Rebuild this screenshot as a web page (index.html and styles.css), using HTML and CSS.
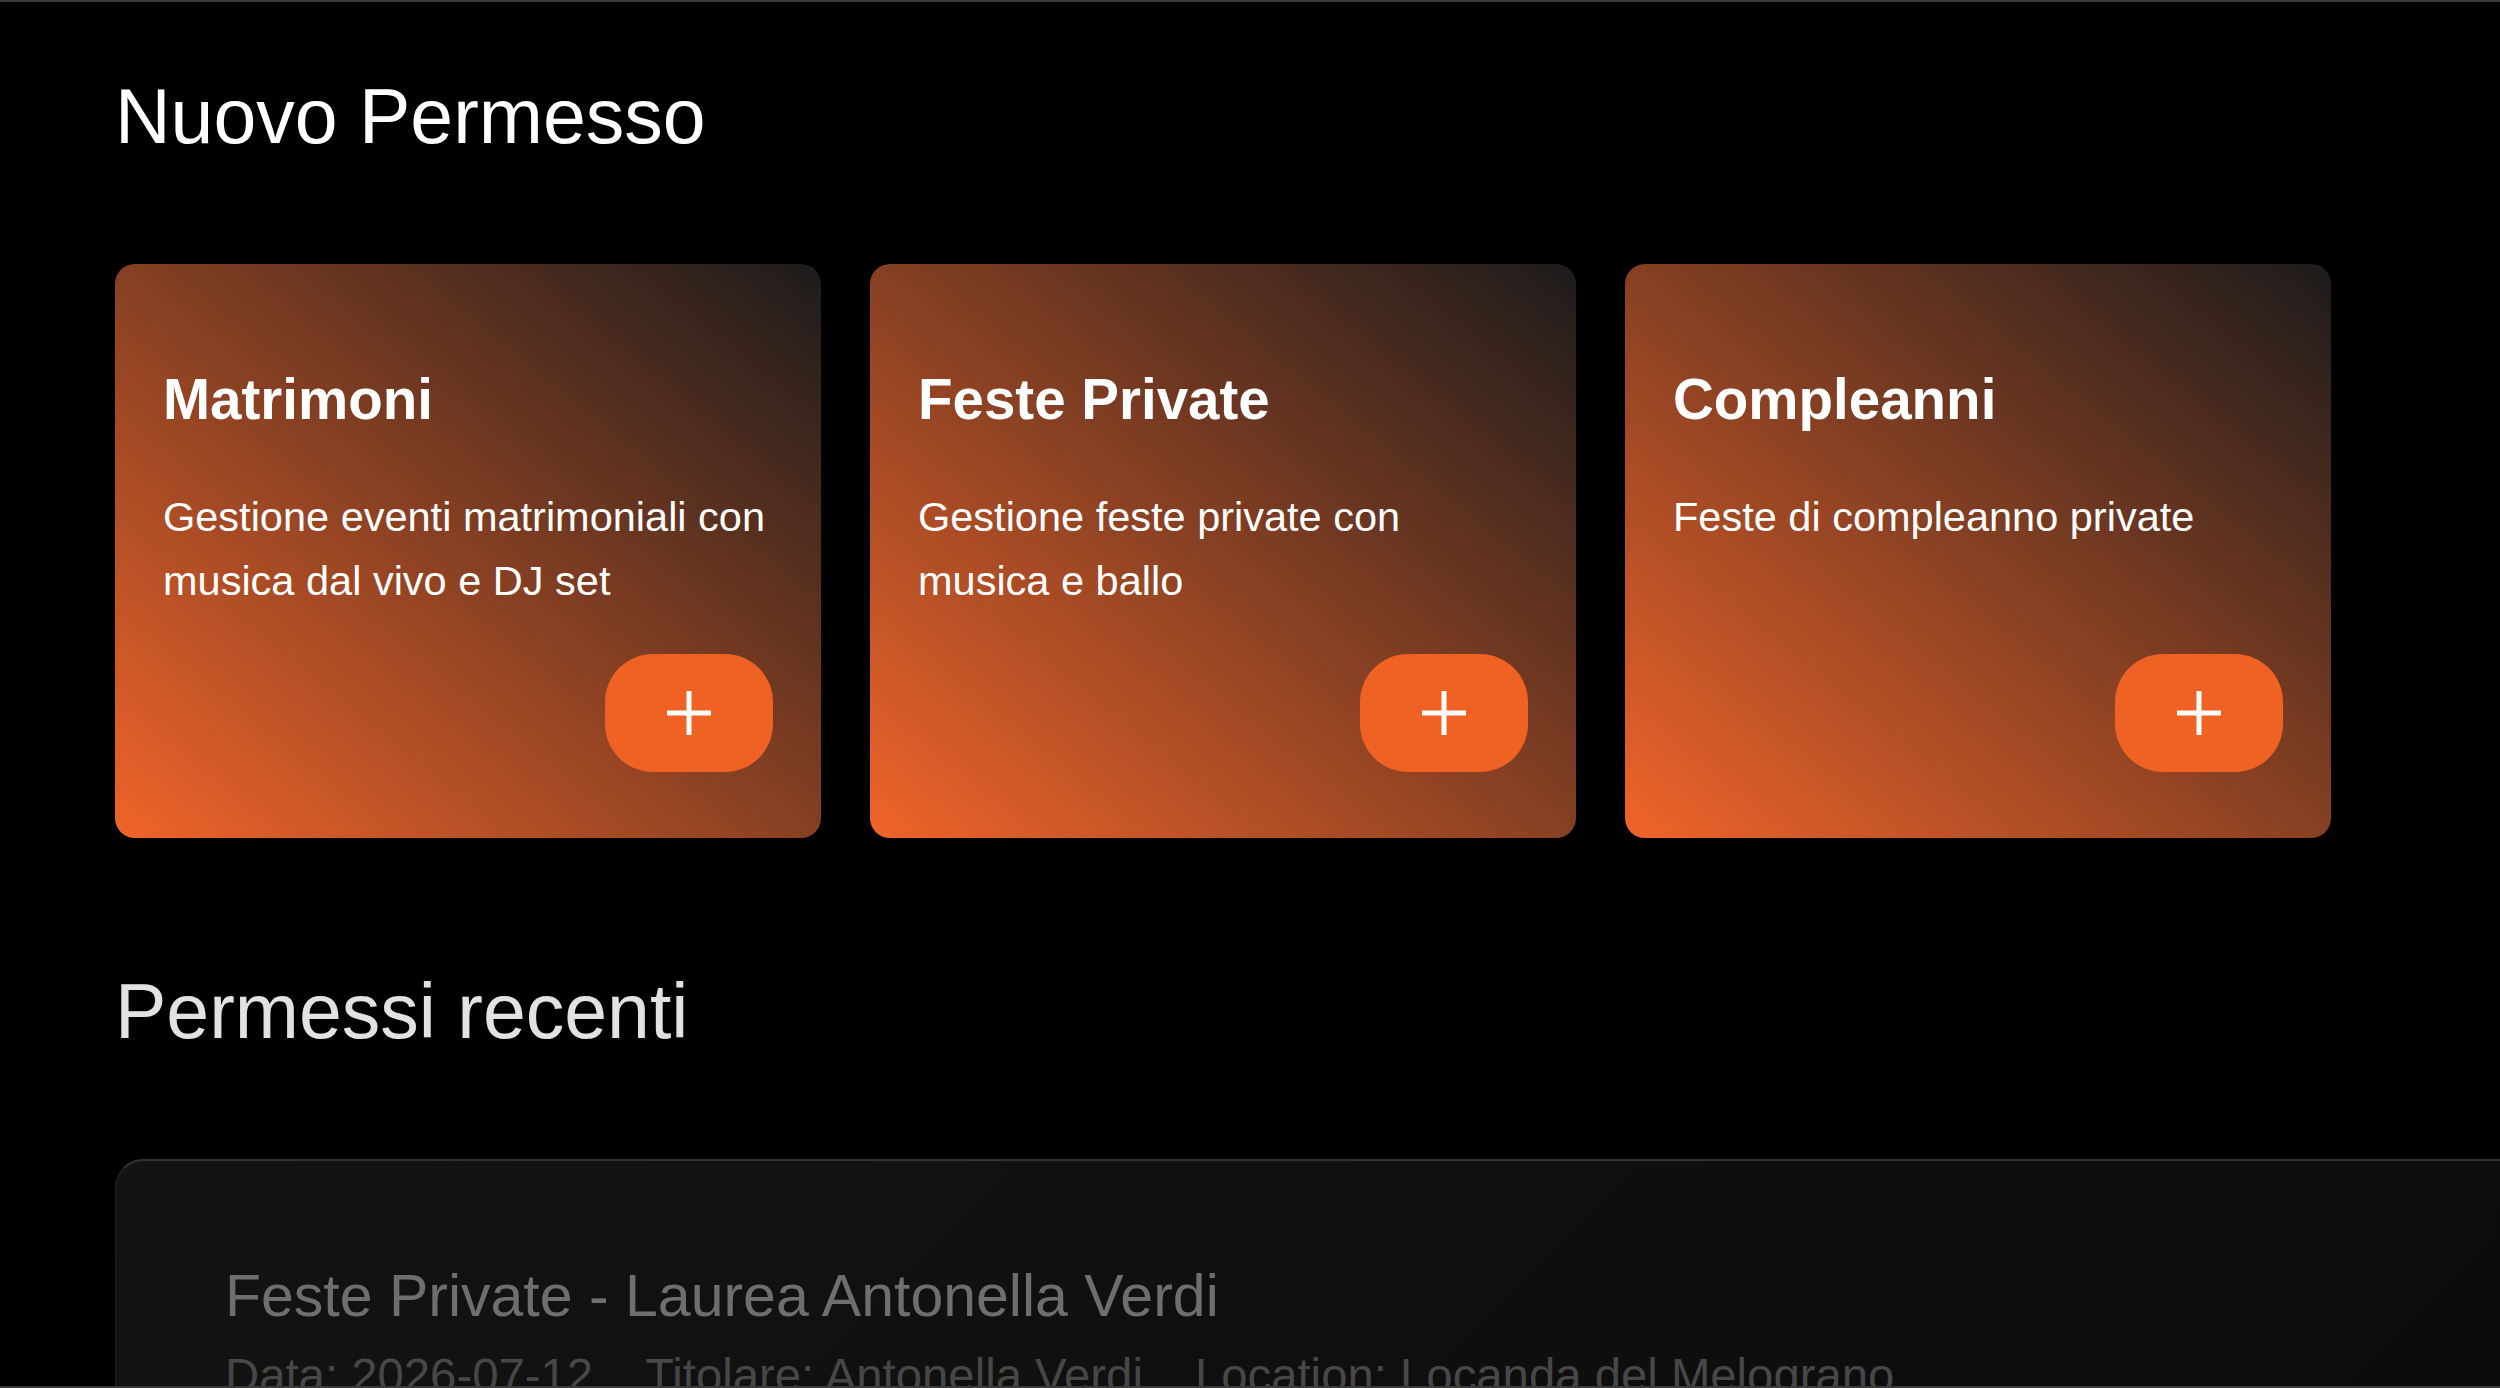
FILE: index.html
```html
<!DOCTYPE html>
<html lang="it">
<head>
    <meta charset="UTF-8">
    <meta name="viewport" content="width=device-width, initial-scale=1.0">
    <title>Nuovo Permesso</title>
    <link rel="stylesheet" href="styles.css">
</head>
<body>
    <div class="frame"></div>
    <div class="page">
        <h1>Nuovo Permesso</h1>

        <div class="cards">
            <div class="card">
                <h3>Matrimoni</h3>
                <p>Gestione eventi matrimoniali con musica dal vivo e DJ set</p>
                <button class="add-btn" aria-label="Nuovo permesso Matrimoni">
                    <svg width="44" height="44" viewBox="0 0 44 44"><path d="M22 0V44M0 22H44" stroke="#fff" stroke-width="5"/></svg>
                </button>
            </div>
            <div class="card">
                <h3>Feste Private</h3>
                <p>Gestione feste private con musica e ballo</p>
                <button class="add-btn" aria-label="Nuovo permesso Feste Private">
                    <svg width="44" height="44" viewBox="0 0 44 44"><path d="M22 0V44M0 22H44" stroke="#fff" stroke-width="5"/></svg>
                </button>
            </div>
            <div class="card">
                <h3>Compleanni</h3>
                <p>Feste di compleanno private</p>
                <button class="add-btn" aria-label="Nuovo permesso Compleanni">
                    <svg width="44" height="44" viewBox="0 0 44 44"><path d="M22 0V44M0 22H44" stroke="#fff" stroke-width="5"/></svg>
                </button>
            </div>
        </div>

        <h2>Permessi recenti</h2>

        <div class="recent-list">
            <div class="recent-item">
                <div class="recent-title">Feste Private - Laurea Antonella Verdi</div>
                <div class="recent-meta">
                    <span>Data: 2026-07-12</span>
                    <span>Titolare: Antonella Verdi</span>
                    <span>Location: Locanda del Melograno</span>
                </div>
            </div>
        </div>
    </div>
</body>
</html>
```

FILE: styles.css
```css
html, body {
    margin: 0;
    background-color: #000;
    overflow: hidden;
}
body {
    font-family: "Liberation Sans", Arial, sans-serif;
    color: #fff;
}
/* thin window edge at top and bottom of the viewport */
.frame {
    position: fixed;
    inset: 0;
    border-top: 2px solid #3a3a3a;
    border-bottom: 2px solid #3a3a3a;
    pointer-events: none;
    z-index: 10;
}
.page {
    padding: 70px 0 0 115px;
}
h1, h2 {
    font-size: 77px;
    font-weight: normal;
    line-height: 1.2;
}
h1 {
    margin: 0 0 102px;
    color: #fff;
}
h2 {
    margin: 127px 0 101px;
    color: #e2e2e2;
}
.cards {
    display: grid;
    grid-template-columns: repeat(3, 706px);
    gap: 49px;
}
.card {
    display: flex;
    flex-direction: column;
    box-sizing: border-box;
    min-height: 574px;
    padding: 102px 48px 66px;
    border-radius: 20px;
    background: linear-gradient(to top right, #f0642a 0%, #1c1b1b 100%);
}
.card h3 {
    margin: 0 0 51px;
    font-size: 56.5px;
    font-weight: bold;
    line-height: 1.2;
}
.card p {
    margin: 0;
    font-size: 41.5px;
    line-height: 63.5px;
}
.add-btn {
    margin-top: auto;
    align-self: flex-end;
    width: 168px;
    height: 118px;
    border: none;
    border-radius: 48px;
    background-color: #f06224;
    display: flex;
    align-items: center;
    justify-content: center;
    cursor: pointer;
}
.recent-list {
    width: 2480px;
}
.recent-item {
    padding: 100px 108px;
    border: 2px solid #1c1c1c;
    border-top-color: #333;
    border-radius: 28px;
    background: linear-gradient(135deg, #131313 0%, #0b0b0b 100%);
}
.recent-title {
    font-size: 59px;
    line-height: 1.2;
    color: #6e6e6e;
}
.recent-meta {
    display: flex;
    gap: 52px;
    margin-top: 16px;
    font-size: 47.3px;
    line-height: 1.2;
    color: #474747;
}
```
